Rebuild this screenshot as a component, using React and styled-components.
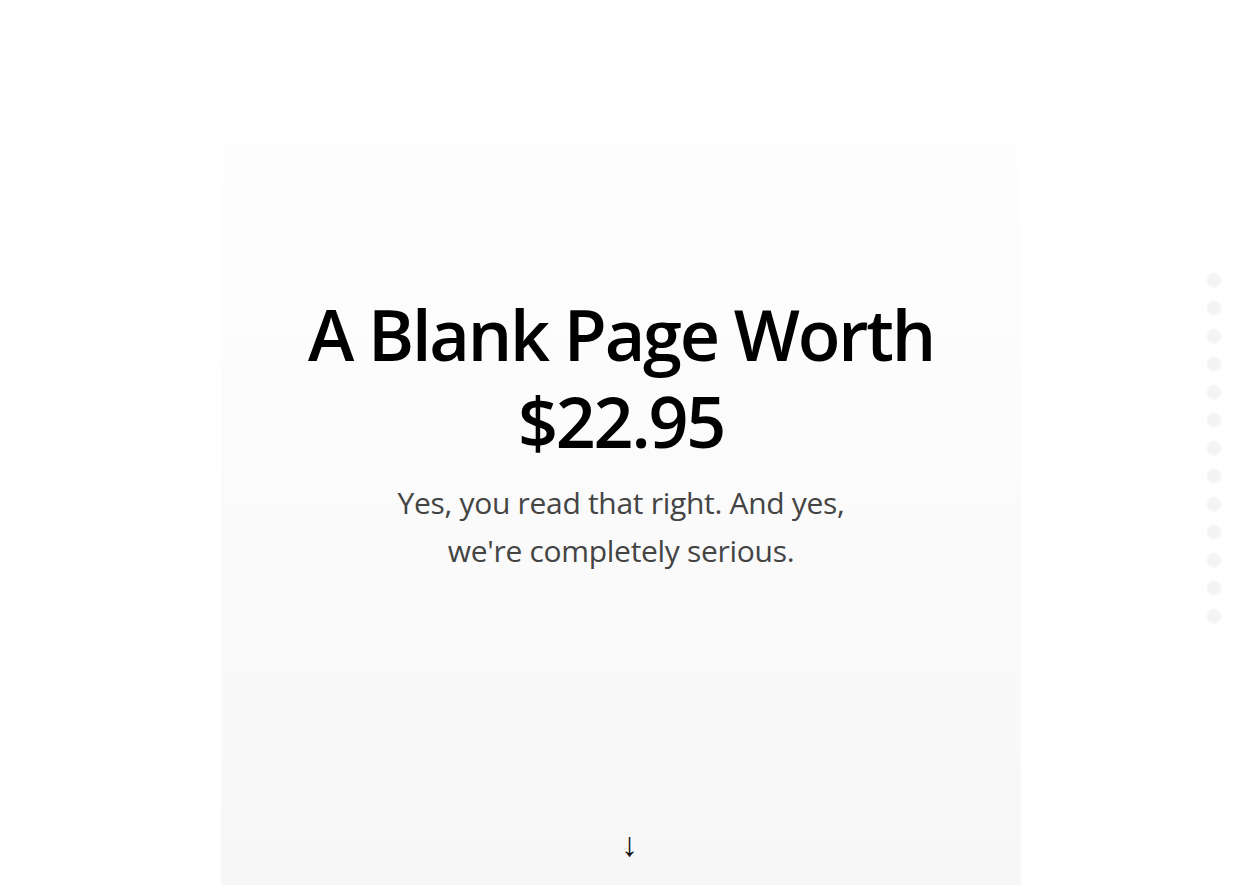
import React from 'react'
import styled, { createGlobalStyle } from 'styled-components'

const GlobalStyle = createGlobalStyle`
    html, body {
        margin: 0;
        padding: 0;
        background: #fff;
        font-family: "Open Sans", "Noto Sans", sans-serif;
        overflow: hidden;
    }
`

const Page = styled.div`
    display: flex;
    justify-content: center;
    padding-right: 5px;
    min-height: 100vh;
`

const Hero = styled.section`
    position: relative;
    box-sizing: border-box;
    width: 800px;
    height: 100vh;
    padding-bottom: 20px;
    display: flex;
    flex-direction: column;
    align-items: center;
    justify-content: center;
    text-align: center;
    background: linear-gradient(180deg, #ffffff 0%, #fdfdfd 30%, #f7f7f7 100%);
`

const Title = styled.h1`
    margin: 0 0 14px;
    font-size: 70px;
    line-height: 87px;
    font-weight: 600;
    letter-spacing: -2.2px;
    color: #000;
`

const Sub = styled.p`
    margin: 0;
    font-size: 30px;
    line-height: 48px;
    font-weight: 400;
    color: #444;
    letter-spacing: -0.3px;
`

const Arrow = styled.div`
    position: absolute;
    left: 50%;
    bottom: 24px;
    font-family: "Liberation Sans", sans-serif;
    font-size: 34px;
    line-height: 1;
    color: #111;
`

const Dots = styled.nav`
    position: fixed;
    right: 26px;
    top: 50%;
    transform: translateY(calc(-50% + 5px));
    display: flex;
    flex-direction: column;
    gap: 14px;
`

const Dot = styled.span`
    display: block;
    width: 14px;
    height: 14px;
    border-radius: 50%;
    background: #f4f4f4;
    box-shadow: 0 1px 3px rgba(0, 0, 0, 0.04);
`

const App = () => {
    return (
        <>
            <GlobalStyle />
            <Page>
                <Hero>
                    <Title>A Blank Page Worth<br />$22.95</Title>
                    <Sub>Yes, you read that right. And yes,<br />we're completely serious.</Sub>
                    <Arrow>↓</Arrow>
                </Hero>
            </Page>
            <Dots>
                {Array.from({ length: 13 }).map((_, i) => <Dot key={i} />)}
            </Dots>
        </>
    )
}

export default App
